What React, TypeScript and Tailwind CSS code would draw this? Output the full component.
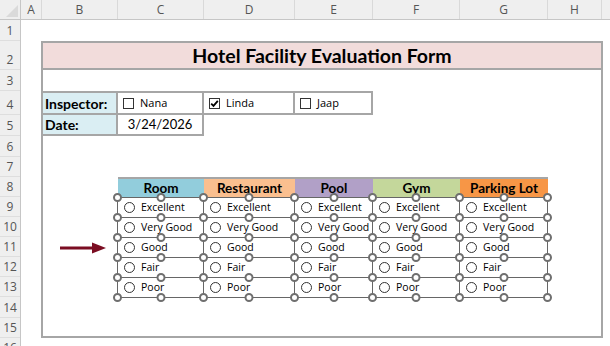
import React from "react";

const cols = [
  { l: "A", w: "w-[21px]" },
  { l: "B", w: "w-[76px]" },
  { l: "C", w: "w-[86px]" },
  { l: "D", w: "w-[91px]" },
  { l: "E", w: "w-[78px]" },
  { l: "F", w: "w-[87px]" },
  { l: "G", w: "w-[88px]" },
  { l: "H", w: "w-[54px]" },
];

const rows = [
  { n: 1, h: "h-[21px]" },
  { n: 2, h: "h-[29px]" },
  { n: 3, h: "h-[21px]" },
  { n: 4, h: "h-[24px]" },
  { n: 5, h: "h-[21px]" },
  { n: 6, h: "h-[21px]" },
  { n: 7, h: "h-[20px]" },
  { n: 8, h: "h-[20px]" },
  { n: 9, h: "h-[20px]" },
  { n: 10, h: "h-[20px]" },
  { n: 11, h: "h-[20px]" },
  { n: 12, h: "h-[20px]" },
  { n: 13, h: "h-[20px]" },
  { n: 14, h: "h-[21px]" },
  { n: 15, h: "h-[20px]" },
  { n: 16, h: "h-[20px]" },
];

const facilities = [
  { name: "Room", w: "w-[86px]", bg: "bg-[#92cddc]" },
  { name: "Restaurant", w: "w-[91px]", bg: "bg-[#fabf8f]" },
  { name: "Pool", w: "w-[78px]", bg: "bg-[#b1a0c7]" },
  { name: "Gym", w: "w-[87px]", bg: "bg-[#c4d79b]" },
  { name: "Parking Lot", w: "w-[88px]", bg: "bg-[#f79646]" },
];

const options = ["Excellent", "Very Good", "Good", "Fair", "Poor"];

const Handle = ({ pos }: { pos: string }) => (
  <span
    className={`absolute z-10 w-[9px] h-[9px] rounded-full border-2 border-[#6f6f6f] bg-white ${pos}`}
  />
);

const Checkbox = ({ checked }: { checked?: boolean }) => (
  <span className="w-[11px] h-[11px] border border-[#333] bg-white flex items-center justify-center shrink-0">
    {checked && (
      <svg width="9" height="9" viewBox="0 0 9 9">
        <path d="M1.2 4.6 L3.5 6.9 L7.8 1.8" fill="none" stroke="#000" strokeWidth="1.8" />
      </svg>
    )}
  </span>
);

export default function App() {
  return (
    <div className="w-[610px] h-[346px] overflow-hidden bg-white flex flex-col font-['Open_Sans',sans-serif]">
      {/* column headers */}
      <div className="flex h-[20px] shrink-0 bg-[#efefef] border-b border-[#c6c6c6]">
        <div className="w-[21px] relative border-r border-[#c6c6c6]">
          <svg className="absolute right-[2px] bottom-[2px]" width="12" height="12" viewBox="0 0 12 12">
            <path d="M12 0 L12 12 L0 12 Z" fill="#dadada" />
          </svg>
        </div>
        {cols.map((c) => (
          <div
            key={c.l}
            className={`${c.w} flex items-center justify-center border-r border-[#d9d9d9] text-[12px] text-[#555]`}
          >
            {c.l}
          </div>
        ))}
        <div className="flex-1" />
      </div>

      <div className="flex flex-1">
        {/* row headers */}
        <div className="w-[21px] shrink-0 bg-[#efefef] border-r border-[#c6c6c6] flex flex-col">
          {rows.map((r) => (
            <div
              key={r.n}
              className={`${r.h} shrink-0 flex items-end justify-center pb-[2px] border-b border-[#dedede] text-[12px] leading-[15px] text-[#555]`}
            >
              {r.n}
            </div>
          ))}
        </div>

        {/* sheet body */}
        <div className="flex-1 flex flex-col">
          <div className="h-[21px] shrink-0" />
          <div className="ml-[20px] w-[562px] h-[297px] shrink-0 border-2 border-[#a6a6a6] flex flex-col">
            {/* title */}
            <div className="h-[27px] shrink-0 bg-[#f2dcdb] border-b-2 border-[#a6a6a6] flex items-center justify-center font-['Lato',sans-serif] font-bold text-[19.5px] text-black">
              Hotel Facility Evaluation Form
            </div>
            <div className="h-[21px] shrink-0" />

            {/* inspector row */}
            <div className="h-[24px] shrink-0 flex">
              <div className="w-[75px] bg-[#daeef3] border-t-2 border-b-2 border-r-2 border-[#a6a6a6] flex items-center pl-[2px] font-['Lato',sans-serif] font-bold text-[14px] text-black">
                Inspector:
              </div>
              <div className="w-[86px] border-t-2 border-b-2 border-r-2 border-[#a6a6a6] flex items-center pl-[5px] gap-[6px] text-[11px] text-black">
                <Checkbox />
                <span>Nana</span>
              </div>
              <div className="w-[91px] border-t-2 border-b-2 border-r-2 border-[#a6a6a6] flex items-center pl-[5px] gap-[6px] text-[11px] text-black">
                <Checkbox checked />
                <span>Linda</span>
              </div>
              <div className="w-[78px] border-t-2 border-b-2 border-r-2 border-[#a6a6a6] flex items-center pl-[5px] gap-[6px] text-[11px] text-black">
                <Checkbox />
                <span>Jaap</span>
              </div>
            </div>

            {/* date row */}
            <div className="h-[21px] shrink-0 flex">
              <div className="w-[75px] bg-[#daeef3] border-b-2 border-r-2 border-[#a6a6a6] flex items-center pl-[2px] font-['Lato',sans-serif] font-bold text-[14px] text-black">
                Date:
              </div>
              <div className="w-[86px] border-b-2 border-r-2 border-[#a6a6a6] flex items-center justify-center font-['Lato',sans-serif] text-[13px] text-black">
                3/24/2026
              </div>
            </div>

            <div className="h-[41px] shrink-0" />

            {/* facility table */}
            <div className="flex shrink-0">
              <div className="w-[75px] shrink-0 flex flex-col">
                <svg className="mt-[65px] ml-[17px]" width="46" height="12" viewBox="0 0 46 12">
                  <rect x="0" y="4.5" width="34" height="3" fill="#7b0d22" />
                  <path d="M32 0.5 L46 6 L32 11.5 Z" fill="#7b0d22" />
                </svg>
              </div>
              <div className="flex flex-col">
                <div className="flex h-[20px] border-t-2 border-[#a6a6a6]">
                  {facilities.map((f) => (
                    <div
                      key={f.name}
                      className={`${f.w} ${f.bg} flex items-center justify-center font-['Lato',sans-serif] font-bold text-[13.5px] text-black`}
                    >
                      {f.name}
                    </div>
                  ))}
                </div>
                <div className="-ml-[1px] border-l border-t border-[#666] flex flex-col">
                  {options.map((o, ri) => (
                    <div key={o} className="flex h-[20px]">
                      {facilities.map((f, ci) => {
                        const lastRow = ri === options.length - 1;
                        const lastCol = ci === facilities.length - 1;
                        return (
                          <div
                            key={f.name}
                            className={`${f.w} relative border-r border-b border-[#666] flex items-center pl-[6px] text-[10.5px] text-black`}
                          >
                            <span className="w-[11px] h-[11px] rounded-full border border-[#333] bg-white shrink-0" />
                            <span className="ml-[6px] leading-none">{o}</span>
                            <Handle pos="left-[-5px] top-[-5px]" />
                            <Handle pos="left-1/2 -translate-x-1/2 top-[-5px]" />
                            {lastCol && <Handle pos="right-[-5px] top-[-5px]" />}
                            {lastRow && <Handle pos="left-[-5px] bottom-[-5px]" />}
                            {lastRow && <Handle pos="left-1/2 -translate-x-1/2 bottom-[-5px]" />}
                            {lastRow && lastCol && <Handle pos="right-[-5px] bottom-[-5px]" />}
                          </div>
                        );
                      })}
                    </div>
                  ))}
                </div>
              </div>
            </div>
          </div>
        </div>
      </div>
    </div>
  );
}
